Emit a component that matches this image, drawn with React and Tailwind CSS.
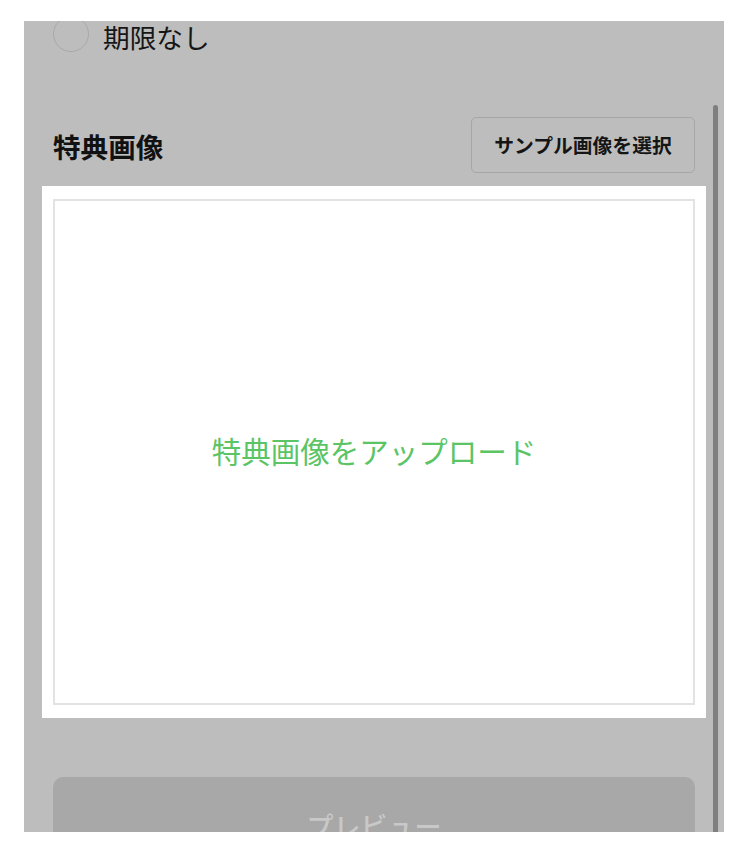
import React from 'react';

const jp = { fontFamily: '"Noto Sans CJK JP", "Noto Sans", sans-serif' };

// Dimmed settings sheet with the upload area highlighted
export default function App() {
  return (
    <div className="min-h-screen bg-white pt-[21px] pl-[24px]" style={jp}>
      <div className="relative w-[700px] h-[811px] overflow-hidden bg-[#bdbdbd]">
        <div className="px-[29px] -mt-[5px]">
          {/* expiry option */}
          <div className="flex items-center h-[36px]">
            <div className="w-[36px] h-[36px] rounded-full border-[1.5px] border-[#a9a9a9]" />
            <span className="ml-[14px] mt-[6px] text-[26.7px] leading-none text-[#161616]">期限なし</span>
          </div>

          {/* header row */}
          <div className="flex items-center justify-between h-[56px] mt-[65px]">
            <h2 className="text-[27.6px] font-bold leading-none text-[#111] mt-[4px]">特典画像</h2>
            <button className="w-[224px] h-[56px] rounded-[5px] border-[1.5px] border-[#a6a6a6] text-[19.8px] font-bold text-[#151515] leading-none">
              サンプル画像を選択
            </button>
          </div>

          {/* highlighted upload area */}
          <div className="mt-[13px] -mx-[11px] px-[11px] py-[13px] bg-white">
            <div className="h-[506px] border-2 border-[#e3e3e3] flex items-center justify-center">
              <span className="text-[29.5px] leading-none text-[#5bc465] -mt-[3px]">特典画像をアップロード</span>
            </div>
          </div>

          {/* preview button */}
          <button className="mt-[59px] w-full h-[96px] rounded-[10px] bg-[#a8a8a8] text-[27px] font-medium text-[#c8c8c8] leading-none">
            プレビュー
          </button>
        </div>

        {/* scrollbar */}
        <div className="absolute left-[689px] top-[84px] w-[5px] h-[760px] rounded-full bg-[#7f7f7f]" />
      </div>
    </div>
  );
}
